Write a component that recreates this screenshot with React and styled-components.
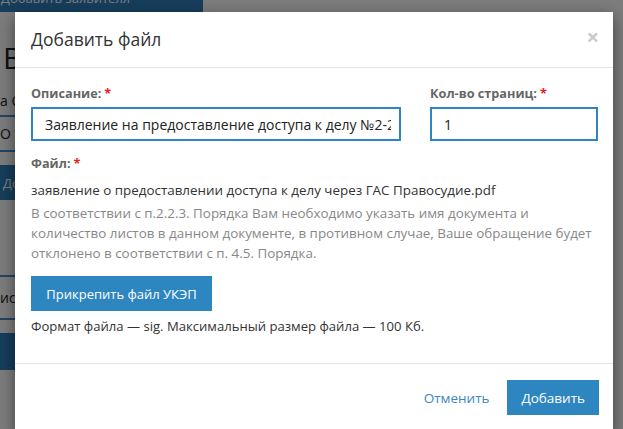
import React from "react";
import styled, { createGlobalStyle } from "styled-components";

const Global = createGlobalStyle`
  html, body { margin: 0; padding: 0; overflow: hidden; background: #fff; }
  body { font-family: "Open Sans", "DejaVu Sans", sans-serif; color: #333; }
  * { box-sizing: border-box; }
`;

const Page = styled.div`
  width: 623px;
  height: 429px;
  position: relative;
  overflow: hidden;
  background: #fff;
`;

const BackContent = styled.div`
  display: flex;
  flex-direction: column;
  width: 400px;
`;

const BackButton = styled.div`
  background: #2e7ebc;
  color: #fff;
  font-size: 13px;
  height: ${p => p.$h || 30}px;
  width: ${p => p.$w || 203}px;
  margin-top: ${p => p.$mt || 0}px;
  display: flex;
  align-items: ${p => p.$align || "center"};
  padding: ${p => p.$pad || "0"};
  white-space: nowrap;
  overflow: hidden;
`;

const BackHeading = styled.div`
  font-size: 30px;
  color: #222;
  margin: 31px 0 0 3px;
  line-height: 30px;
`;

const BackRow = styled.div`
  font-size: 14px;
  color: #222;
  height: ${p => p.$h}px;
  display: flex;
  align-items: center;
  border-bottom: ${p => (p.$line ? "2px solid #3f8fd0" : "none")};
  white-space: nowrap;
  margin-top: ${p => p.$mt || 0}px;
`;

const Overlay = styled.div`
  position: absolute;
  inset: 0;
  background: rgba(0, 0, 0, 0.51);
`;

const Modal = styled.div`
  position: absolute;
  top: 12px;
  left: 15px;
  width: 598px;
  background: #fff;
  box-shadow: 0 5px 15px rgba(0, 0, 0, 0.5);
  display: flex;
  flex-direction: column;
`;

const Header = styled.div`
  display: flex;
  align-items: center;
  justify-content: space-between;
  padding: 0 14px 0 16px;
  border-bottom: 1px solid #e5e5e5;
  height: 56px;
`;

const Title = styled.h4`
  margin: 0;
  font-size: 17.5px;
  font-weight: 400;
  color: #333;
  line-height: 26px;
  margin-top: -2px;
`;

const Close = styled.button`
  border: 0;
  background: none;
  padding: 0;
  font-family: "Open Sans", sans-serif;
  font-size: 22px;
  font-weight: 700;
  color: #c9c9c9;
  line-height: 1;
  margin-top: -8px;
`;

const Body = styled.div`
  padding: 15px 15px 27px 16px;
  display: flex;
  flex-direction: column;
`;

const Row = styled.div`
  display: grid;
  grid-template-columns: 370px 168px;
  column-gap: 29px;
  margin-bottom: 12px;
`;

const Group = styled.div`
  display: flex;
  flex-direction: column;
`;

const Label = styled.label`
  font-size: 12.7px;
  font-weight: 700;
  color: #666;
  line-height: 20px;
  margin-bottom: ${p => p.$mb || 4}px;
`;

const Req = styled.span`
  color: #e3201c;
  margin-left: 3px;
`;

const Input = styled.input`
  height: 34px;
  width: 100%;
  border: 2px solid #2e86c1;
  padding: 0 8px 0 12px;
  font-family: "Open Sans", sans-serif;
  font-size: 14px;
  color: #222;
  outline: none;
  background: #fff;
`;

const Text = styled.div`
  font-size: ${p => p.$size || 13.4}px;
  line-height: 20px;
  color: ${p => (p.$muted ? "#888" : "#333")};
  margin-top: ${p => p.$mt || 0}px;
`;

const Button = styled.button`
  background: #2e86c1;
  color: #fff;
  border: 0;
  font-family: "Open Sans", sans-serif;
  font-size: 13.5px;
  height: 35px;
  padding: 0 14px;
  cursor: pointer;
`;

const AttachButton = styled(Button)`
  align-self: flex-start;
  margin-top: 13px;
  font-size: 13px;
  width: 181px;
  padding: 0;
`;

const LinkButton = styled.button`
  background: none;
  border: 0;
  color: #3a87c4;
  font-family: "Open Sans", sans-serif;
  font-size: 13.5px;
  height: 35px;
  padding: 0 12px;
`;

const Footer = styled.div`
  border-top: 1px solid #e5e5e5;
  padding: 16px 14px 16px 16px;
  display: flex;
  justify-content: flex-end;
  align-items: center;
  gap: 6px;
`;

export default function App() {
  return (
    <Page>
      <Global />
      <BackContent>
        <BackButton $mt={-18} $h={30} $w={203} $align="flex-end" $pad="0 0 5px 1px">
          Добавить заявителя
        </BackButton>
        <BackHeading>Выбор заявителя</BackHeading>
        <BackRow $h={32} $mt={12} $line>а ООО «Альфа»</BackRow>
        <BackRow $h={35} $line>О "Бета"</BackRow>
        <BackRow $h={13} />
        <BackButton $h={35} $w={160} $pad="0 0 0 3px">Добавить</BackButton>
        <BackRow $h={77} $line />
        <BackRow $h={43} $line>иск</BackRow>
        <BackRow $h={13} />
        <BackButton $h={37} $w={160} />
      </BackContent>
      <Overlay />
      <Modal>
        <Header>
          <Title>Добавить файл</Title>
          <Close>×</Close>
        </Header>
        <Body>
          <Row>
            <Group>
              <Label>
                Описание:<Req>*</Req>
              </Label>
              <Input
                readOnly
                value="Заявление на предоставление доступа к делу №2-2345/2020"
              />
            </Group>
            <Group>
              <Label>
                Кол-во страниц:<Req>*</Req>
              </Label>
              <Input readOnly value="1" />
            </Group>
          </Row>
          <Label $mb={7}>
            Файл:<Req>*</Req>
          </Label>
          <Text>заявление о предоставлении доступа к делу через ГАС Правосудие.pdf</Text>
          <Text $muted $mt={3}>
            В соответствии с п.2.2.3. Порядка Вам необходимо указать имя документа и
            количество листов в данном документе, в противном случае, Ваше обращение будет
            отклонено в соответствии с п. 4.5. Порядка.
          </Text>
          <AttachButton>Прикрепить файл УКЭП</AttachButton>
          <Text $mt={5} $size={13.1}>
            Формат файла — sig. Максимальный размер файла — 100 Кб.
          </Text>
        </Body>
        <Footer>
          <LinkButton>Отменить</LinkButton>
          <Button>Добавить</Button>
        </Footer>
      </Modal>
    </Page>
  );
}
